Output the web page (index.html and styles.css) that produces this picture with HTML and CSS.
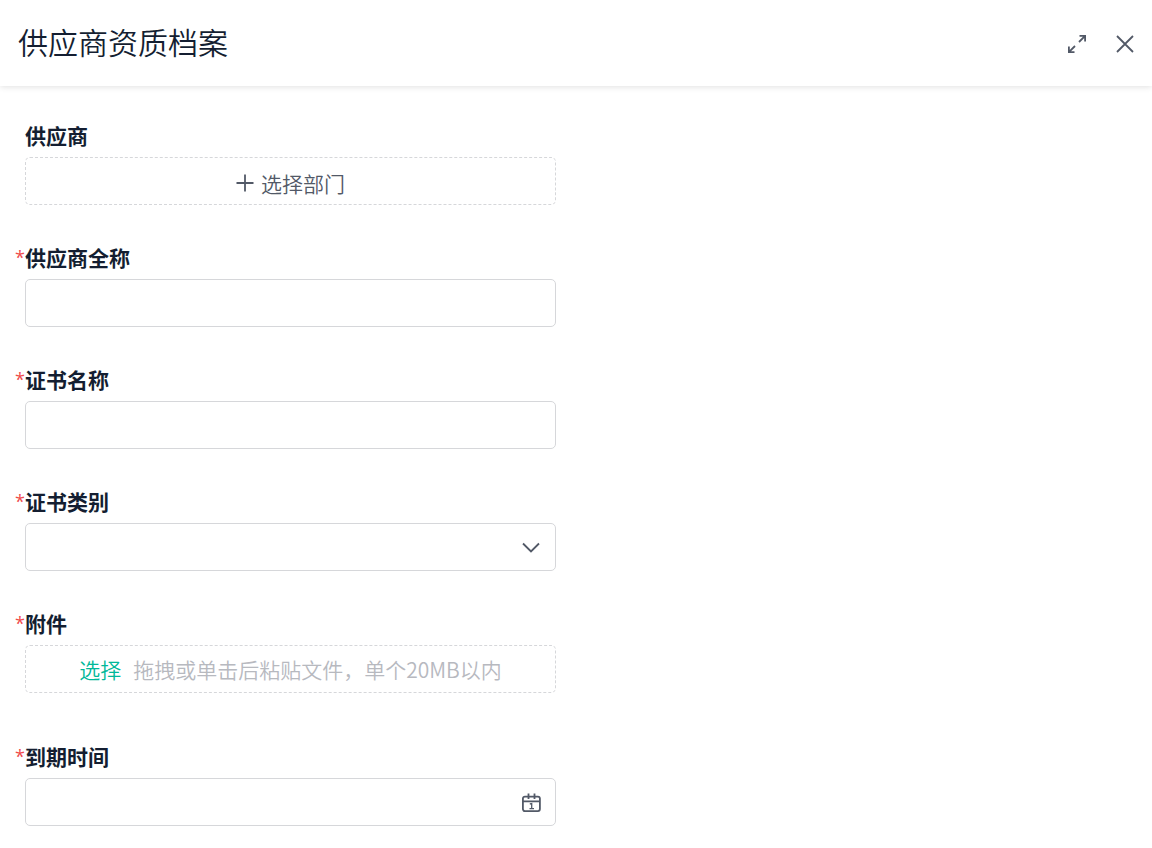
FILE: index.html
```html
<!DOCTYPE html>
<html lang="zh-CN">
    <head>
        <title>供应商资质档案</title>
        <meta charset="UTF-8"/>
        <meta name="viewport" content="width=device-width, initial-scale=1.0"/>
        <link rel="stylesheet" href="styles.css">
    </head>
    <body>
        <header class="topo">
            <h1>供应商资质档案</h1>
            <div class="acoes">
                <button type="button" class="icone" aria-label="全屏">
                    <svg width="20" height="20" viewBox="0 0 20 20">
                        <path d="M12.5 1.9H18.1V7.5M17.6 2.4L12 8M7.5 18.1H1.9V12.5M2.4 17.6L8 12"/>
                    </svg>
                </button>
                <button type="button" class="icone" aria-label="关闭">
                    <svg width="20" height="20" viewBox="0 0 20 20">
                        <path d="M2 2L18 18M18 2L2 18"/>
                    </svg>
                </button>
            </div>
        </header>
        <form name="fornecedor" class="formulario">
            <div class="campo">
                <label for="departamento">供应商</label>
                <button type="button" id="departamento" class="caixa tracejada escolher">
                    <svg width="18" height="18" viewBox="0 0 18 18">
                        <path d="M9 .5V17.5M.5 9H17.5"/>
                    </svg>
                    选择部门
                </button>
            </div>
            <div class="campo obrigatorio">
                <label for="nome">供应商全称</label>
                <input type="text" id="nome" name="nome" class="caixa" required/>
            </div>
            <div class="campo obrigatorio">
                <label for="certificado">证书名称</label>
                <input type="text" id="certificado" name="certificado" class="caixa" required/>
            </div>
            <div class="campo obrigatorio">
                <label for="tipo">证书类别</label>
                <div class="com-icone">
                    <select id="tipo" name="tipo" class="caixa" required>
                        <option value=""></option>
                    </select>
                    <svg width="20" height="20" viewBox="0 0 20 20">
                        <path d="M2 5.5L10 13.5L18 5.5"/>
                    </svg>
                </div>
            </div>
            <div class="campo obrigatorio anexo">
                <label for="anexo">附件</label>
                <div class="caixa tracejada">
                    <button type="button" id="anexo" class="link">选择</button>
                    <span>拖拽或单击后粘贴文件，单个20MB以内</span>
                </div>
            </div>
            <div class="campo obrigatorio">
                <label for="validade">到期时间</label>
                <div class="com-icone">
                    <input type="text" id="validade" name="validade" class="caixa" required/>
                    <svg width="20" height="20" viewBox="0 0 20 20">
                        <rect x="1.9" y="3.6" width="17" height="14.5" rx="2"/>
                        <path d="M2 8.3H18.8M7.5 .5V6M13.5 .5V6"/>
                        <path class="fino" d="M8.8 11L10.7 10.6V15.6M8.5 15.6H13"/>
                    </svg>
                </div>
            </div>
        </form>
    </body>
</html>
```

FILE: styles.css
```css
* {
    box-sizing: border-box;
}

body {
    margin: 0;
    background-color: #fff;
    color: #141e31;
    font-family: "Noto Sans CJK SC", sans-serif;
    font-size: 21px;
    font-weight: 350;
}

button, input, select {
    font: inherit;
    color: inherit;
}

svg {
    display: block;
    fill: none;
    stroke: #525967;
    stroke-width: 1.8;
}

svg .fino {
    stroke-width: 1.3;
}

/* cabecalho */
.topo {
    display: flex;
    justify-content: space-between;
    height: 86px;
    padding: 21px 17px 0 18px;
    box-shadow: 0 1px 6px rgba(0, 0, 0, 0.12);
}

.topo h1 {
    margin: 0;
    font-size: 30px;
    font-weight: 350;
    line-height: 40px;
}

.acoes {
    display: flex;
    align-items: center;
    gap: 28px;
    height: 46px;
}

.icone {
    padding: 0;
    border: 0;
    background: none;
}

/* formulario */
.formulario {
    display: grid;
    grid-template-columns: 1fr 1fr;
    gap: 40px;
    padding: 37px 25px 20px;
}

.campo {
    grid-column: 1;
    position: relative;
}

.campo label {
    display: block;
    height: 34px;
    line-height: 25px;
    font-weight: 700;
}

.obrigatorio::before {
    content: "*";
    position: absolute;
    left: -10px;
    top: 0;
    line-height: 25px;
    font-family: "Open Sans", sans-serif;
    font-size: 18px;
    font-weight: 400;
    color: #f04b4b;
}

.caixa {
    display: block;
    width: 100%;
    height: 48px;
    padding: 0 12px;
    border: 1px solid #d6d7da;
    border-radius: 5px;
    background-color: #fff;
}

.tracejada {
    display: flex;
    align-items: center;
    justify-content: center;
    gap: 12px;
    border-style: dashed;
    color: #b7b9bf;
}

.escolher {
    gap: 7px;
    padding-top: 3px;
    color: #525967;
}

.link {
    padding: 0;
    border: 0;
    background: none;
    color: #00b899;
}

.anexo {
    padding-bottom: 11px;
}

.com-icone {
    position: relative;
}

.com-icone select {
    appearance: none;
}

.com-icone svg {
    position: absolute;
    right: 15px;
    top: 15px;
    pointer-events: none;
}
```
